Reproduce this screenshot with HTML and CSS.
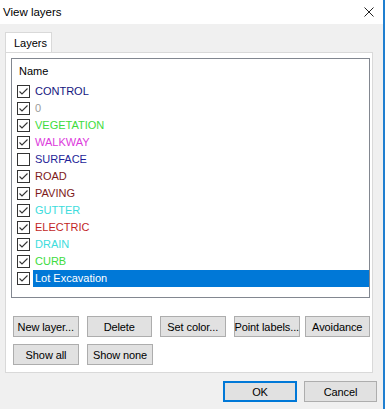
FILE: index.html
```html
<!DOCTYPE html>
<html lang="en">
<head>
  <meta charset="UTF-8" />
  <title>View layers</title>
  <link rel="stylesheet" href="styles.css">
</head>
<body>
  <div class="window">
    <div class="titlebar">
      <span class="title">View layers</span>
      <svg class="close" width="10" height="10" viewBox="0 0 10 10">
        <path d="M0.5 0.5 L9.5 9.5 M9.5 0.5 L0.5 9.5" stroke="#222" stroke-width="1" fill="none"/>
      </svg>
    </div>

    <div class="content">
      <div class="tabs">
        <div class="tab">Layers</div>
      </div>

      <div class="tab-panel">
        <div class="layer-list">
          <div class="list-header">Name</div>

          <div class="layer-row">
            <span class="check on"><svg viewBox="0 0 11 11"><path d="M1.5 5.5 L4 8 L9.5 2.5"/></svg></span>
            <span class="layer-name c-control">CONTROL</span>
          </div>
          <div class="layer-row">
            <span class="check on"><svg viewBox="0 0 11 11"><path d="M1.5 5.5 L4 8 L9.5 2.5"/></svg></span>
            <span class="layer-name c-zero">0</span>
          </div>
          <div class="layer-row">
            <span class="check on"><svg viewBox="0 0 11 11"><path d="M1.5 5.5 L4 8 L9.5 2.5"/></svg></span>
            <span class="layer-name c-green">VEGETATION</span>
          </div>
          <div class="layer-row">
            <span class="check on"><svg viewBox="0 0 11 11"><path d="M1.5 5.5 L4 8 L9.5 2.5"/></svg></span>
            <span class="layer-name c-walkway">WALKWAY</span>
          </div>
          <div class="layer-row">
            <span class="check"></span>
            <span class="layer-name c-surface">SURFACE</span>
          </div>
          <div class="layer-row">
            <span class="check on"><svg viewBox="0 0 11 11"><path d="M1.5 5.5 L4 8 L9.5 2.5"/></svg></span>
            <span class="layer-name c-road">ROAD</span>
          </div>
          <div class="layer-row">
            <span class="check on"><svg viewBox="0 0 11 11"><path d="M1.5 5.5 L4 8 L9.5 2.5"/></svg></span>
            <span class="layer-name c-road">PAVING</span>
          </div>
          <div class="layer-row">
            <span class="check on"><svg viewBox="0 0 11 11"><path d="M1.5 5.5 L4 8 L9.5 2.5"/></svg></span>
            <span class="layer-name c-cyan">GUTTER</span>
          </div>
          <div class="layer-row">
            <span class="check on"><svg viewBox="0 0 11 11"><path d="M1.5 5.5 L4 8 L9.5 2.5"/></svg></span>
            <span class="layer-name c-electric">ELECTRIC</span>
          </div>
          <div class="layer-row">
            <span class="check on"><svg viewBox="0 0 11 11"><path d="M1.5 5.5 L4 8 L9.5 2.5"/></svg></span>
            <span class="layer-name c-cyan">DRAIN</span>
          </div>
          <div class="layer-row">
            <span class="check on"><svg viewBox="0 0 11 11"><path d="M1.5 5.5 L4 8 L9.5 2.5"/></svg></span>
            <span class="layer-name c-green">CURB</span>
          </div>
          <div class="layer-row">
            <span class="check on"><svg viewBox="0 0 11 11"><path d="M1.5 5.5 L4 8 L9.5 2.5"/></svg></span>
            <span class="layer-name selected">Lot Excavation</span>
          </div>
        </div>

        <div class="btn-row">
          <button class="btn">New layer...</button>
          <button class="btn">Delete</button>
          <button class="btn">Set color...</button>
          <button class="btn">Point labels...</button>
          <button class="btn btn-last">Avoidance</button>
        </div>
        <div class="btn-row second">
          <button class="btn">Show all</button>
          <button class="btn">Show none</button>
        </div>
      </div>

      <div class="dialog-actions">
        <button class="btn btn-ok">OK</button>
        <button class="btn btn-cancel">Cancel</button>
      </div>
    </div>
  </div>
</body>
</html>
```

FILE: styles.css
```css
body {
  margin: 0;
  font-family: 'Liberation Sans', Arial, sans-serif;
  font-size: 11px;
  color: #000;
  background: #f0f0f0;
}
.window {
  width: 385px;
  height: 409px;
  box-sizing: border-box;
  border-right: 2px solid #1f7fd0;
  background: #f0f0f0;
}
.titlebar {
  height: 24px;
  display: flex;
  align-items: center;
  justify-content: space-between;
  padding: 0 9px 0 3px;
  background: #fff;
  font-size: 11.5px;
}
.close {
  display: block;
  margin-top: 0;
}
.content {
  padding: 8px 6px 0 5px;
}
.tabs {
  display: flex;
  height: 20px;
}
.tab {
  position: relative;
  z-index: 1;
  width: 47px;
  height: 20px;
  box-sizing: border-box;
  border: 1px solid #d9d9d9;
  border-bottom: none;
  background: #fff;
  padding-left: 8px;
  line-height: 20px;
  margin-bottom: -1px;
}
.tab-panel {
  height: 321px;
  box-sizing: border-box;
  margin-right: 4px;
  border: 1px solid #d9d9d9;
  background: #fff;
  padding: 5px 2px 0 5px;
}
.layer-list {
  height: 240px;
  box-sizing: border-box;
  border: 1px solid #828790;
  background: #fff;
}
.list-header {
  height: 24px;
  line-height: 24px;
  padding-left: 7px;
}
.layer-row {
  display: flex;
  align-items: center;
  height: 17px;
  padding-left: 5px;
}
.check {
  width: 13px;
  height: 13px;
  box-sizing: border-box;
  border: 1px solid #333;
  background: #fff;
}
.check svg {
  display: block;
  width: 11px;
  height: 11px;
  fill: none;
  stroke: #333;
  stroke-width: 1.1;
}
.layer-name {
  flex: 1;
  margin-left: 3px;
  padding-left: 2px;
  height: 17px;
  line-height: 17px;
}
.c-control { color: #15157e; }
.c-zero { color: #9a9a9a; }
.c-green { color: #3ddc3d; }
.c-walkway { color: #dc3adc; }
.c-surface { color: #1e1e98; }
.c-road { color: #7e1a1a; }
.c-cyan { color: #3ddcdc; }
.c-electric { color: #c21f1f; }
.layer-name.selected {
  background: #0078d7;
  color: #fff;
}
.btn-row {
  display: flex;
  gap: 8px;
  margin: 18px 0 0 2px;
}
.btn-row.second {
  margin-top: 7px;
}
.btn {
  width: 66px;
  height: 21px;
  padding: 0;
  box-sizing: border-box;
  border: 1px solid #adadad;
  background: #e1e1e1;
  font-family: inherit;
  font-size: 11px;
  color: #000;
  white-space: nowrap;
  letter-spacing: -0.1px;
}
.btn-last {
  margin-left: -3px;
}
.dialog-actions {
  display: flex;
  justify-content: flex-end;
  gap: 7px;
  margin-top: 8px;
}
.btn-ok {
  width: 74px;
  border-color: #0078d7;
  box-shadow: inset 0 0 0 1px #0078d7;
}
.btn-cancel {
  width: 73px;
}
```
